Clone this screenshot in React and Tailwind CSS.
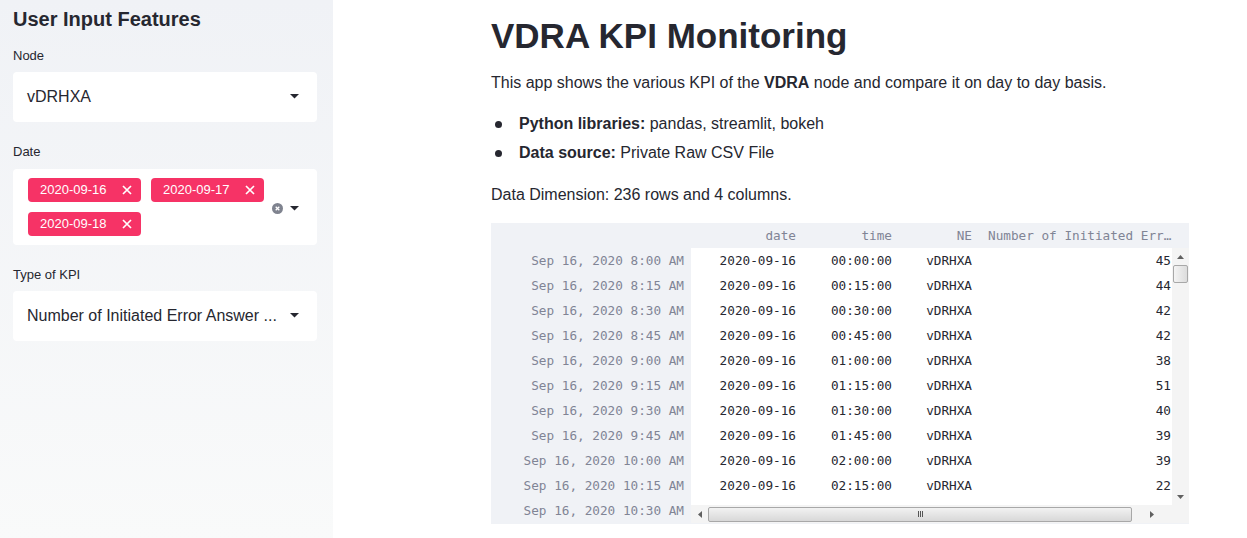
import React from "react";

const rows = [
  ["Sep 16, 2020 8:00 AM", "00:00:00", "45"],
  ["Sep 16, 2020 8:15 AM", "00:15:00", "44"],
  ["Sep 16, 2020 8:30 AM", "00:30:00", "42"],
  ["Sep 16, 2020 8:45 AM", "00:45:00", "42"],
  ["Sep 16, 2020 9:00 AM", "01:00:00", "38"],
  ["Sep 16, 2020 9:15 AM", "01:15:00", "51"],
  ["Sep 16, 2020 9:30 AM", "01:30:00", "40"],
  ["Sep 16, 2020 9:45 AM", "01:45:00", "39"],
  ["Sep 16, 2020 10:00 AM", "02:00:00", "39"],
  ["Sep 16, 2020 10:15 AM", "02:15:00", "22"],
  ["Sep 16, 2020 10:30 AM", "02:30:00", "31"],
];

function Caret() {
  return (
    <svg width="9" height="5" viewBox="0 0 9 5" className="shrink-0">
      <path d="M0 0h9L4.5 4.5z" fill="#262730" />
    </svg>
  );
}

function Cross() {
  return (
    <svg width="10" height="10" viewBox="0 0 10 10">
      <path d="M1 1l8 8M9 1L1 9" stroke="white" strokeWidth="1.7" />
    </svg>
  );
}

function Tag({ label }) {
  return (
    <span className="flex items-center justify-between w-[113px] h-[24px] rounded-[4px] bg-[#f63366] pl-[12px] pr-[9px] text-[13px] text-white">
      {label}
      <Cross />
    </span>
  );
}

function Select({ value }) {
  return (
    <div className="flex items-center justify-between h-[50px] rounded-[4px] bg-white pl-[14px] pr-[18px] text-[16px] text-[#262730]">
      <span>{value}</span>
      <Caret />
    </div>
  );
}

function Sidebar() {
  return (
    <aside className="w-[333px] h-full shrink-0 bg-gradient-to-b from-[#f0f2f6] to-[#f9fafa] pl-[13px] pt-[7px] pr-[16px]">
      <h2 className="text-[20px] font-bold text-[#262730] leading-[24px]">User Input Features</h2>
      <p className="mt-[15px] text-[13px] text-[#262730]">Node</p>
      <div className="mt-[6px]">
        <Select value="vDRHXA" />
      </div>
      <p className="mt-[20px] text-[13px] text-[#262730]">Date</p>
      <div className="mt-[8px] flex items-center h-[76px] rounded-[4px] bg-white pl-[15px] pr-[18px]">
        <div className="flex flex-wrap gap-[10px] w-[240px]">
          <Tag label="2020-09-16" />
          <Tag label="2020-09-17" />
          <Tag label="2020-09-18" />
        </div>
        <div className="ml-auto flex items-center gap-[7px] mt-[2px]">
          <svg width="11" height="11" viewBox="0 0 11 11">
            <circle cx="5.5" cy="5.5" r="5.5" fill="#7f838f" />
            <path d="M3.7 3.7l3.6 3.6M7.3 3.7L3.7 7.3" stroke="white" strokeWidth="1.3" />
          </svg>
          <Caret />
        </div>
      </div>
      <p className="mt-[20px] text-[13px] text-[#262730]">Type of KPI</p>
      <div className="mt-[6px]">
        <Select value="Number of Initiated Error Answer ..." />
      </div>
    </aside>
  );
}

function Arrow({ dir }) {
  const d = {
    up: "M0 4L3.5 0L7 4z",
    down: "M0 0h7L3.5 4z",
    left: "M4 0v7L0 3.5z",
    right: "M0 0v7L4 3.5z",
  }[dir];
  const vert = dir === "up" || dir === "down";
  return (
    <svg width={vert ? 7 : 4} height={vert ? 4 : 7} viewBox={vert ? "0 0 7 4" : "0 0 4 7"}>
      <path d={d} fill="#606060" />
    </svg>
  );
}

function Table() {
  const mono = "font-['DejaVu_Sans_Mono','Liberation_Mono',monospace] text-[12.7px]";
  return (
    <div className={`mt-[16px] w-[698px] bg-[#f0f2f6] ${mono}`}>
      <div className="flex h-[25px] items-center text-[#808495]">
        <div className="w-[200px] shrink-0" />
        <div className="w-[112px] shrink-0 text-right pr-[7px]">date</div>
        <div className="w-[96px] shrink-0 text-right pr-[7px]">time</div>
        <div className="w-[80px] shrink-0 text-right pr-[7px]">NE</div>
        <div className="w-[196px] shrink-0 pl-[9px] truncate">Number of Initiated Error Answer</div>
      </div>
      <div className="flex h-[276px]">
        <div className="w-[200px] shrink-0 text-[#808495]">
          {rows.map((r) => (
            <div key={r[0]} className="h-[25px] flex items-center justify-end pr-[7px]">
              {r[0]}
            </div>
          ))}
        </div>
        <div className="flex-1 flex flex-col h-[276px]">
          <div className="flex h-[257px]">
            <div className="w-[481px] bg-white overflow-hidden text-[#262730]">
              {rows.slice(0, 10).map((r) => (
                <div key={r[0]} className="flex h-[25px] items-center">
                  <div className="w-[112px] shrink-0 text-right pr-[7px]">2020-09-16</div>
                  <div className="w-[96px] shrink-0 text-right pr-[7px]">{r[1]}</div>
                  <div className="w-[80px] shrink-0 text-right pr-[7px]">vDRHXA</div>
                  <div className="w-[193px] shrink-0 text-right pr-[1px]">{r[2]}</div>
                </div>
              ))}
            </div>
            <div className="w-[17px] bg-[#f4f4f4] flex flex-col items-center">
              <div className="h-[17px] flex items-center justify-center">
                <Arrow dir="up" />
              </div>
              <div className="w-[15px] h-[18px] rounded-[2px] border border-[#a8a8a8] bg-gradient-to-r from-[#f4f4f4] to-[#dcdcdc]" />
              <div className="flex-1" />
              <div className="h-[17px] flex items-center justify-center">
                <Arrow dir="down" />
              </div>
            </div>
          </div>
          <div className="flex h-[18px]">
            <div className="w-[481px] bg-[#f4f4f4] flex items-center">
              <div className="w-[17px] flex justify-center">
                <Arrow dir="left" />
              </div>
              <div className="w-[424px] h-[15px] rounded-[2px] border border-[#a8a8a8] bg-gradient-to-b from-[#f2f2f2] to-[#d8d8d8] flex items-center justify-center">
                <span className="flex gap-[1px]">
                  <span className="w-[1px] h-[6px] bg-[#555]" />
                  <span className="w-[1px] h-[6px] bg-[#555]" />
                  <span className="w-[1px] h-[6px] bg-[#555]" />
                </span>
              </div>
              <div className="flex-1 flex justify-center">
                <Arrow dir="right" />
              </div>
            </div>
            <div className="w-[17px] bg-[#f4f4f4]" />
          </div>
        </div>
      </div>
    </div>
  );
}

function Bullet({ children }) {
  return (
    <li className="flex items-center">
      <span className="w-[7px] h-[7px] rounded-full bg-[#262730] ml-[4px] mr-[17px]" />
      <span>{children}</span>
    </li>
  );
}

export default function App() {
  return (
    <div className="flex w-[1247px] h-[538px] overflow-hidden bg-white font-['Liberation_Sans',Arial,sans-serif] text-[#262730]">
      <Sidebar />
      <main className="pl-[158px] pt-[14px]">
        <h1 className="text-[35px] font-bold leading-[44px]">VDRA KPI Monitoring</h1>
        <p className="mt-[13px] text-[16px]">
          This app shows the various KPI of the <b>VDRA</b> node and compare it on day to day basis.
        </p>
        <ul className="mt-[17px] text-[16px] space-y-[5px]">
          <Bullet>
            <b>Python libraries:</b> pandas, streamlit, bokeh
          </Bullet>
          <Bullet>
            <b>Data source:</b> Private Raw CSV File
          </Bullet>
        </ul>
        <p className="mt-[18px] text-[16px]">Data Dimension: 236 rows and 4 columns.</p>
        <Table />
      </main>
    </div>
  );
}
